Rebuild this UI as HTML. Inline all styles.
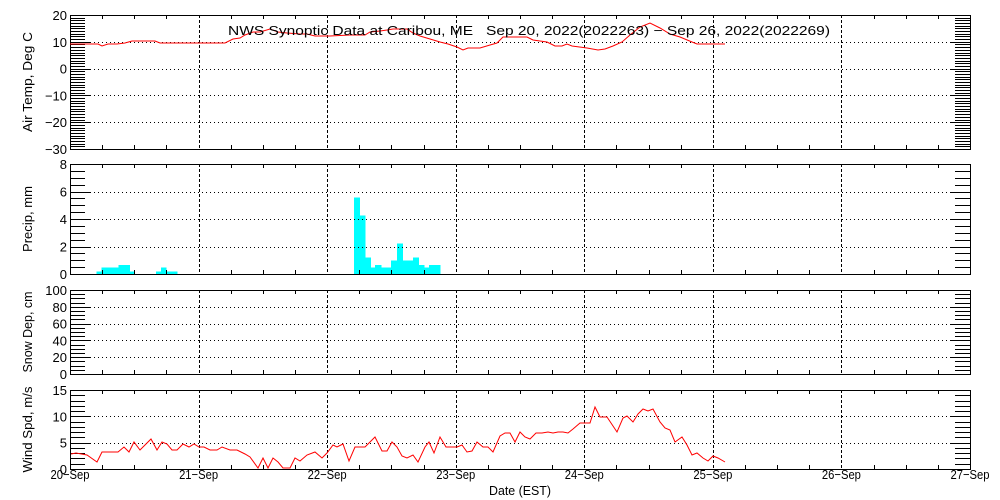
<!DOCTYPE html>
<html><head><meta charset="utf-8"><style>
html,body{margin:0;padding:0;background:#fff;width:1000px;height:500px;overflow:hidden}
svg{display:block}
text{font-family:"Liberation Sans",sans-serif;font-size:13px;fill:#000}
</style></head><body>
<svg id="s" width="1000" height="500" xmlns="http://www.w3.org/2000/svg" shape-rendering="crispEdges"></svg>
<script>
var s=document.getElementById('s'),out='';
var X0=70,X1=970,DX=(X1-X0)/7;
function L(x1,y1,x2,y2,st){out+='<line x1="'+x1+'" y1="'+y1+'" x2="'+x2+'" y2="'+y2+'" stroke="#000" stroke-width="1" '+(st||'')+'/>';}
function T(x,y,t,a,extra){out+='<text x="'+x+'" y="'+y+'" text-anchor="'+(a||'start')+'" '+(extra||'')+'>'+t+'</text>';}
var panels=[
 {top:15,bot:149,min:-30,max:20,maj:10,mnr:1,labels:[20,10,0,-10,-20,-30],title:'Air Temp, Deg C',tl:100},
 {top:164,bot:274,min:0,max:8,maj:2,mnr:0.5,labels:[8,6,4,2,0],title:'Precip, mm',tl:66},
 {top:290,bot:374,min:0,max:100,maj:20,mnr:5,labels:[100,80,60,40,20,0],title:'Snow Dep, cm',tl:81},
 {top:390,bot:469,min:0,max:15,maj:5,mnr:1,labels:[15,10,5,0],title:'Wind Spd, m/s',tl:86}
];
panels.forEach(function(p){
 function Y(v){return p.bot-(v-p.min)/(p.max-p.min)*(p.bot-p.top);}
 for(var v=p.min;v<=p.max+1e-6;v+=p.mnr){var y=Math.round(Y(v))+0.5;L(X0,y,X0+15,y);L(X1-15,y,X1,y);}
 for(var v=p.min;v<=p.max+1e-6;v+=p.maj){var y=Math.round(Y(v))+0.5;
  L(X0,y,X0+20,y);L(X1-20,y,X1,y);
  if(v>p.min&&v<p.max)L(X0+20,y,X1-20,y,'stroke-dasharray="1 3"');
 }
 for(var i=1;i<28;i++){var x=Math.round(X0+i*DX/4)+0.5;
  if(i%4==0){L(x,p.top,x,p.bot,'stroke-dasharray="3 2"');}
  else{L(x,p.top,x,p.top+4);L(x,p.bot-4,x,p.bot);}
 }
 out+='<rect x="70.5" y="'+(p.top+0.5)+'" width="900" height="'+(p.bot-p.top)+'" fill="none" stroke="#000" stroke-width="1.2"/>';
 p.labels.forEach(function(v){T(67,Y(v)+5,String(v).replace('-','\u2212'),'end');});
 var cy=(p.top+p.bot)/2;
 T(0,0,p.title,'middle','textLength="'+p.tl+'" lengthAdjust="spacingAndGlyphs" transform="translate(32,'+cy+') rotate(-90)"');
});
var bars=[[96.7,101.7,271.7],[101.7,118.3,267.7],[118.3,130,265],[130,135,271.7],[156,161,271.7],[161,166.7,267.7],[166.7,177.7,271.7],
[354,360,197.7],[360,365.7,215.7],[365.7,371,257.7],[371,375,267.7],[375,381.7,265],[381.7,391,267.7],[391,397,260.7],[397,403,243.7],[403,413,260.7],[413,419,257.7],[419,424.3,265],[424.3,429,267.7],[429,440.7,265]];
var bs='';bars.forEach(function(b){bs+='<rect x="'+b[0]+'" y="'+b[2]+'" width="'+(b[1]-b[0])+'" height="'+(274-b[2])+'" fill="#00ffff"/>';});
out=bs+out;
var tp=[[70,44],[98,44],[102,46],[108,44],[117,44],[125,43],[132,41],[155,41],[160,43],[165,43],[225,43],[233,39],[240,38],[245,35],[253,32],[260,32],[270,29],[278,32],[287,33],[300,34],[307,34],[315,36],[330,36],[350,35],[365,35],[370,32],[380,31],[387,30],[393,29],[407,29],[413,33],[420,36],[430,39],[440,42],[448,44],[457,47],[463,50],[468,48],[480,48],[490,45],[497,43],[503,37],[527,37],[533,40],[547,42],[555,46],[562,46],[567,44],[572,46],[587,48],[598,50],[605,49],[613,46],[622,42],[630,35],[640,27],[650,23],[660,28],[670,34],[680,37],[692,42],[697,44],[725,44]];
var wp=[[71,454],[76,453],[87,455],[97,462],[102,452],[118,452],[124,447],[129,452],[134,442],[140,450],[151,439],[157,450],[162,442],[167,444],[172,450],[177,450],[183,444],[189,447],[194,444],[199,447],[204,447],[210,450],[217,450],[222,447],[230,450],[237,450],[245,454],[250,457],[258,468],[263,458],[268,468],[273,458],[278,462],[283,468],[290,468],[295,458],[300,461],[307,455],[315,452],[322,458],[327,453],[333,445],[337,447],[343,444],[349,461],[355,447],[365,447],[375,437],[382,451],[387,451],[392,442],[397,447],[402,456],[407,458],[413,455],[418,462],[425,447],[429,442],[434,453],[440,437],[446,447],[457,447],[462,445],[467,452],[472,451],[477,442],[483,447],[488,447],[493,452],[500,436],[505,433],[510,433],[515,442],[520,432],[525,437],[530,439],[536,433],[542,433],[548,432],[553,433],[558,432],[563,432],[568,433],[573,429],[580,423],[590,423],[595,407],[600,417],[607,417],[617,432],[623,418],[627,416],[633,422],[638,414],[643,409],[648,411],[653,409],[660,422],[665,428],[670,430],[675,442],[682,437],[687,445],[692,455],[697,453],[703,458],[708,461],[713,456],[718,458],[725,462]];
function PL(a){return '<polyline fill="none" stroke="#ff0000" stroke-width="1" shape-rendering="auto" points="'+a.map(function(p){return p.join(',')}).join(' ')+'"/>';}
out+=PL(tp)+PL(wp);
var days=['20-Sep','21-Sep','22-Sep','23-Sep','24-Sep','25-Sep','26-Sep','27-Sep'];
days.forEach(function(d,i){T(X0+i*DX,479,d.replace('-','\u2212'),'middle','textLength="39" lengthAdjust="spacingAndGlyphs"');});
T(520,495,'Date (EST)','middle','textLength="62" lengthAdjust="spacingAndGlyphs"');
T(228,35,'NWS Synoptic Data at Caribou, ME &#160;&#160;Sep 20, 2022(2022263) \u2212 Sep 26, 2022(2022269)','start','textLength="602" lengthAdjust="spacingAndGlyphs"');
s.innerHTML=out;
</script>
</body></html>
